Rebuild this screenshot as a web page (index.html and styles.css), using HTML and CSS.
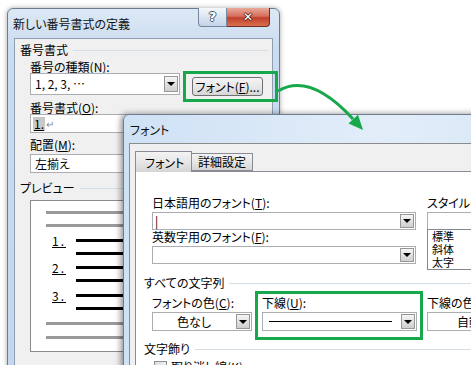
FILE: index.html
```html
<!DOCTYPE html>
<html lang="ja">
<head>
    <meta charset="UTF-8">
    <title>新しい番号書式の定義</title>
    <link rel="stylesheet" href="styles.css">
</head>
<body>

    <!-- 後ろのダイアログ -->
    <div class="win win-numfmt">
        <div class="titlebar">
            <span class="title">新しい番号書式の定義</span>
            <div class="caption-btns">
                <span class="cap-help">?</span>
                <span class="cap-close">✕</span>
            </div>
        </div>
        <div class="client">
            <div class="group-head">番号書式</div>
            <div class="lbl">番号の種類(<u>N</u>):</div>
            <div class="kind-row">
                <div class="combo combo-kind"><span class="val">1, 2, 3, …</span><span class="drop"></span></div>
                <button class="btn">フォント(<u>F</u>)...</button>
            </div>
            <div class="lbl lbl-fmt">番号書式(<u>O</u>):</div>
            <div class="field-fmt"><span class="num-sel">1.</span><span class="ret">↵</span></div>
            <div class="lbl lbl-align">配置(<u>M</u>):</div>
            <div class="combo combo-align"><span class="val">左揃え</span></div>
            <div class="group-head preview-head">プレビュー</div>
            <div class="preview">
                <div class="pline gray m10"></div>
                <div class="pline gray m10"></div>
                <div class="pline black m12"><span class="pnum">1.</span></div>
                <div class="pline black m10 sub"></div>
                <div class="pline black m11"><span class="pnum">2.</span></div>
                <div class="pline black m10 sub"></div>
                <div class="pline black m12"><span class="pnum">3.</span></div>
                <div class="pline black m10 sub"></div>
                <div class="pline gray m12"></div>
                <div class="pline gray m11"></div>
            </div>
        </div>
    </div>

    <div class="hilite hilite-btn"></div>

    <!-- フォント ダイアログ -->
    <div class="win win-font">
        <div class="titlebar">
            <span class="title">フォント</span>
        </div>
        <div class="client">
            <div class="tabs">
                <span class="tab active">フォント</span>
                <span class="tab">詳細設定</span>
            </div>
            <div class="tabpage">
                <div class="fields fields-top">
                    <div class="col col-face">
                        <div class="lbl">日本語用のフォント(<u>T</u>):</div>
                        <div class="combo fcombo"><span class="val caret">|</span><span class="drop"></span></div>
                        <div class="lbl lbl-gap">英数字用のフォント(<u>F</u>):</div>
                        <div class="combo fcombo"><span class="val"></span><span class="drop"></span></div>
                    </div>
                    <div class="col col-style">
                        <div class="lbl">スタイル(<u>Y</u>):</div>
                        <div class="combo fcombo"><span class="val"></span></div>
                        <ul class="listbox">
                            <li>標準</li>
                            <li>斜体</li>
                            <li>太字</li>
                        </ul>
                    </div>
                </div>

                <div class="group-head fgroup">すべての文字列</div>
                <div class="fields fields-all">
                    <div class="col col-color">
                        <div class="lbl">フォントの色(<u>C</u>):</div>
                        <div class="combo fcombo tall"><span class="val center">色なし</span><span class="drop"></span></div>
                    </div>
                    <div class="col col-uline">
                        <div class="lbl">下線(<u>U</u>):</div>
                        <div class="combo fcombo tall"><span class="val"><span class="uline-sample"></span></span><span class="drop"></span></div>
                    </div>
                    <div class="col col-ucolor">
                        <div class="lbl">下線の色(<u>I</u>):</div>
                        <div class="combo fcombo tall"><span class="val center">自動</span><span class="drop"></span></div>
                    </div>
                </div>

                <div class="group-head fgroup deco">文字飾り</div>
                <div class="check-row">
                    <span class="checkbox"></span>
                    <span>取り消し線(<u>K</u>)</span>
                </div>
            </div>
        </div>
    </div>

    <div class="hilite hilite-uline"></div>

    <svg class="arrow" width="471" height="365" viewBox="0 0 471 365">
        <path d="M278 91 Q310 72 353 119" fill="none" stroke="#17a84b" stroke-width="3"/>
        <polygon points="363,130 348.5,123.5 358,114.8" fill="#17a84b"/>
    </svg>

</body>
</html>
```

FILE: styles.css
```css
/* general styling */
* {
box-sizing: border-box;
margin: 0;
padding: 0;
}

body {
background-color: #fff;
color: #000;
font-family: "Noto Sans CJK JP", sans-serif;
font-feature-settings: "palt";
font-size: 12px;
height: 365px;
line-height: 14px;
overflow: hidden;
position: relative;
width: 471px;
}

u {
text-underline-offset: 1px;
}

/* windows */
.win {
background: linear-gradient(#dce8f5, #cadcf0 40px, #c3d6ed);
border: 1px solid #6d7d8f;
border-radius: 6px 6px 0 0;
box-shadow: 0 0 5px rgba(0, 0, 0, .35);
display: flex;
flex-direction: column;
position: absolute;
}

.win-numfmt {
height: 380px;
left: 7px;
top: 8px;
width: 273px;
z-index: 1;
}

.win-font {
background: linear-gradient(90deg, #cfe1f5, #e2edf9 60%, #d6e6f6);
box-shadow: -2px 0 6px rgba(0, 0, 0, .45);
height: 270px;
left: 123px;
top: 114px;
width: 430px;
z-index: 3;
}

.titlebar {
display: flex;
flex-shrink: 0;
height: 29px;
padding-left: 5px;
}

.title {
flex: 1;
line-height: 29px;
color: #111;
}

.win-font .titlebar {
height: 28px;
padding-left: 6px;
}

.win-font .title {
line-height: 30px;
}

.caption-btns {
display: flex;
height: 19px;
margin-right: 9px;
margin-top: -1px;
}

.cap-help,
.cap-close {
color: #fff;
font-family: "DejaVu Sans", sans-serif;
font-weight: bold;
line-height: 18px;
text-align: center;
text-shadow: 1px 0 #4a5668, -1px 0 #4a5668, 0 1px #4a5668, 0 -1px #4a5668;
}

.cap-help {
background: linear-gradient(#f4f7fb, #dbe5f1 50%, #c3d4e8);
border: 1px solid #7587a0;
border-top: none;
border-radius: 0 0 0 4px;
font-size: 13px;
width: 29px;
}

.cap-close {
background: linear-gradient(#eaa999, #d66f5c 45%, #c23f2c 55%, #d9714f);
border: 1px solid #6b2e2a;
border-left: none;
border-top: none;
border-radius: 0 0 4px 0;
font-size: 12px;
text-shadow: 1px 0 #5a211b, -1px 0 #5a211b, 0 1px #5a211b, 0 -1px #5a211b;
width: 43px;
}

.client {
background-color: #f0f0f0;
border: 1px solid #8f9fb1;
flex: 1;
margin: 0 6px;
}

.win-font .client {
border-color: #8c8c8c;
margin: 0 0 0 5px;
}

/* controls */
.group-head {
align-items: center;
display: flex;
height: 16px;
margin-right: 4px;
margin-top: 3px;
padding-left: 5px;
}

.group-head::after {
border-top: 1px solid #d5dde5;
content: "";
flex: 1;
margin-left: 5px;
}

.lbl {
height: 12px;
line-height: 12px;
margin-top: 3px;
padding-left: 15px;
white-space: nowrap;
}

.combo {
align-items: center;
background-color: #fff;
border: 1px solid #abadb3;
display: flex;
}

.val {
flex: 1;
min-width: 0;
padding-left: 4px;
white-space: nowrap;
}

.val.center {
padding-left: 0;
text-align: center;
}

.drop {
align-items: center;
align-self: stretch;
background: linear-gradient(#f6f6f6, #e0e0e0 50%, #cfcfcf);
border: 1px solid #979797;
display: flex;
justify-content: center;
margin: 1px;
width: 14px;
}

.drop::after {
border-left: 4px solid transparent;
border-right: 4px solid transparent;
border-top: 4px solid #000;
content: "";
}

.kind-row {
display: flex;
height: 24px;
}

.combo-kind {
height: 22px;
margin-left: 15px;
width: 150px;
}

.combo-kind .drop {
margin: 2px 1px;
}

.btn {
background: linear-gradient(#f4f4f4, #e8e8e8 50%, #d6d6d6);
border: 1px solid #707070;
border-radius: 3px;
font: inherit;
font-feature-settings: "palt";
height: 19px;
line-height: 16px;
margin-left: 12px;
margin-top: 4px;
width: 71px;
}

.lbl-fmt {
margin-top: 5px;
}

.field-fmt {
align-items: center;
background-color: #fff;
border: 1px solid #abadb3;
display: flex;
height: 19px;
margin-left: 15px;
padding-left: 2px;
width: 200px;
}

.num-sel {
background-color: #c8c8c8;
padding: 0 1px;
text-decoration: underline;
}

.ret {
color: #888;
font-size: 10px;
margin-left: 1px;
}

.lbl-align {
margin-top: 6px;
}

.combo-align {
height: 19px;
margin-left: 15px;
margin-top: 3px;
width: 200px;
}

.preview-head {
margin-top: 7px;
}

/* preview box */
.preview {
background-color: #fff;
border: 1px solid #8a8a8a;
height: 152px;
margin: 4px 0 0 15px;
width: 240px;
}

.pline {
align-items: center;
display: flex;
height: 3px;
padding-left: 15px;
}

.pline::after {
content: "";
flex: 1;
height: 3px;
}

.pline.gray::after {
background-color: #9a9a9a;
}

.pline.black::after {
background-color: #000;
}

.pline.black {
padding-left: 21px;
}

.pline.sub {
padding-left: 45px;
}

.pnum {
letter-spacing: 2px;
line-height: 14px;
text-decoration: underline;
width: 24px;
}

.m10 { margin-top: 10px; }
.m11 { margin-top: 11px; }
.m12 { margin-top: 12px; }

/* font dialog */
.tabs {
display: flex;
align-items: flex-start;
height: 21px;
margin: 7px 0 -1px 5px;
position: relative;
z-index: 1;
}

.tab {
background: linear-gradient(#f3f3f3, #e6e6e6 50%, #d5d5d5);
border: 1px solid #898c95;
border-left: none;
height: 18px;
line-height: 16px;
margin-top: 2px;
padding-left: 6px;
width: 61px;
}

.tab.active {
background-color: #fff;
border-bottom: none;
border-left: 1px solid #898c95;
height: 21px;
line-height: 22px;
margin-top: 0;
padding-left: 9px;
width: 57px;
}

.tabpage {
background-color: #fff;
border: 1px solid #898c95;
height: 220px;
margin-left: 5px;
}

.fields {
display: flex;
padding-left: 16px;
}

.fields .lbl {
height: 14px;
line-height: 14px;
margin-top: 0;
padding-left: 0;
}

.fields-top {
gap: 11px;
margin-top: 24px;
}

.col-face {
width: 264px;
}

.col-style {
width: 120px;
}

.fcombo {
height: 18px;
margin-top: 2px;
}

.fcombo.tall {
height: 19px;
}

.lbl-gap {
margin-top: 6px;
}

.caret {
padding-left: 2px;
}

.listbox {
border: 1px solid #828790;
font-size: 11px;
height: 41px;
line-height: 13px;
list-style-type: none;
margin-top: -1px;
padding: 0 0 0 4px;
}

.fgroup {
height: 14px;
margin-top: 6px;
padding-left: 8px;
}

.fields-all {
gap: 10px;
margin-top: 6px;
}

.col-color {
width: 100px;
}

.col-uline {
width: 155px;
}

.col-ucolor {
width: 100px;
}

.uline-sample {
border-top: 1px solid #000;
display: block;
margin: 0 8px 0 2px;
}

.fgroup.deco {
margin-top: 11px;
}

.check-row {
align-items: center;
display: flex;
gap: 4px;
margin-top: 4px;
padding-left: 18px;
}

.checkbox {
background: linear-gradient(135deg, #dcdcdc, #fff);
border: 1px solid #8f8f8f;
height: 13px;
width: 13px;
}

/* highlights */
.hilite {
border: 3px solid #17a84b;
position: absolute;
}

.hilite-btn {
height: 31px;
left: 183px;
top: 71px;
width: 95px;
z-index: 2;
}

.hilite-uline {
height: 49px;
left: 255px;
top: 291px;
width: 168px;
z-index: 4;
}

.arrow {
left: 0;
position: absolute;
top: 0;
z-index: 5;
}
```
